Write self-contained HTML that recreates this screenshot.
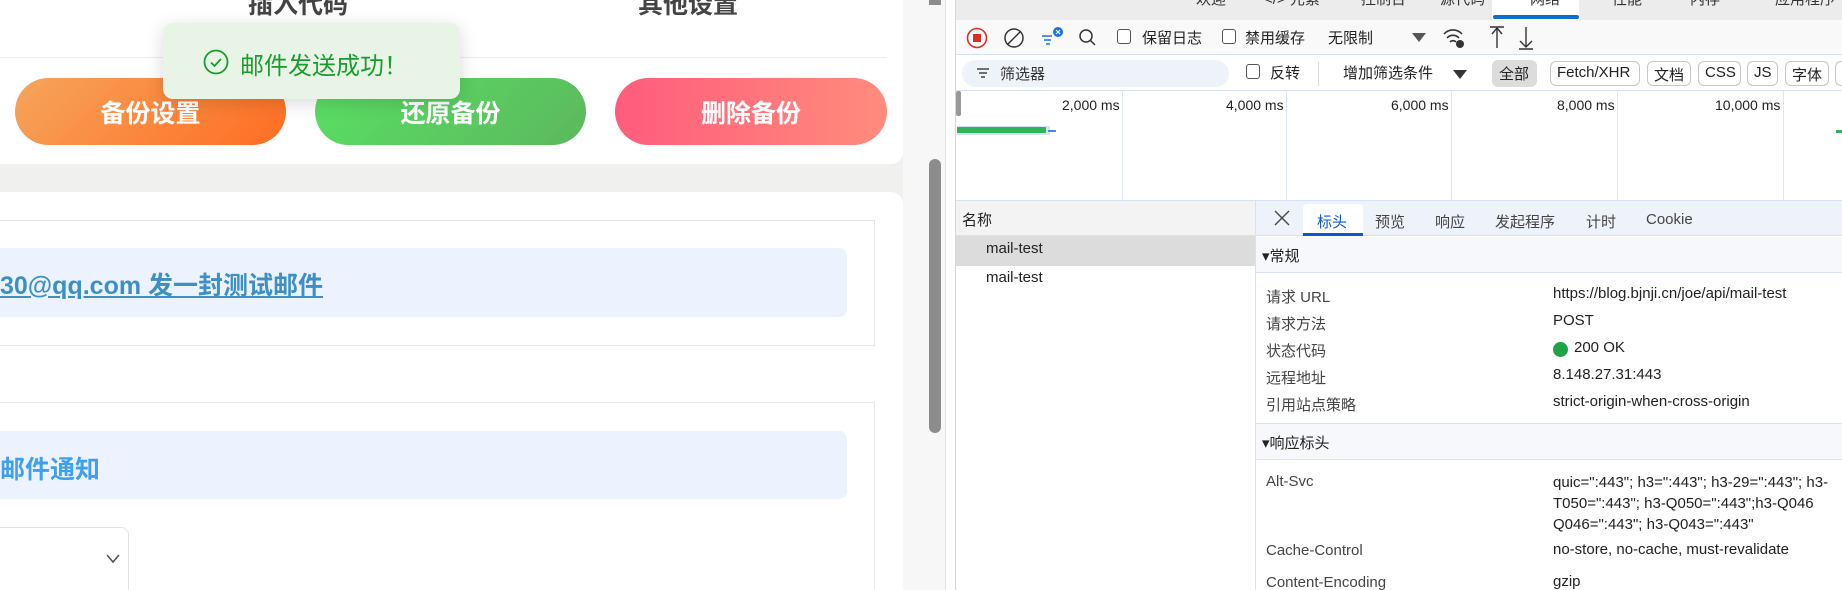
<!DOCTYPE html>
<html style="overflow:hidden"><head><meta charset="utf-8"><style>
*{margin:0;padding:0;box-sizing:border-box}
html,body{overflow:hidden}
body{width:1842px;height:590px;overflow:hidden;background:#f0f0ee;font-family:"Liberation Sans","Noto Sans CJK SC",sans-serif;position:relative}
.a{position:absolute;white-space:nowrap}
.btn{position:absolute;top:78px;height:67px;border-radius:34px;color:#fff;font-weight:bold;font-size:25px;display:flex;align-items:center;justify-content:center}
.dt{font-size:15px;color:#222}
.lab{color:#444;font-size:15px}
.vline{position:absolute;top:91px;height:109px;width:1px;background:#dde6f4}
.cb{position:absolute;width:14px;height:15px;border:1.5px solid #555;border-radius:3px;background:#fff}
.chip{position:absolute;top:61px;height:25px;border:1px solid #c8c8c8;border-radius:6px;font-size:15px;padding:2px 6px;color:#222}
</style></head><body>
<div class="a" style="left:0;top:0;width:903px;height:164px;background:#fff;border-radius:0 0 12px 0"></div>
<div class="a" style="left:248px;top:-15px;font-size:25px;font-weight:bold;color:#444">插入代码</div>
<div class="a" style="left:638px;top:-15px;font-size:25px;font-weight:bold;color:#444">其他设置</div>
<div class="a" style="left:0;top:57px;width:887px;height:1px;background:#ececf2"></div>
<div class="btn" style="left:15px;width:271px;background:linear-gradient(135deg,#f6a55c,#ff6d22)">备份设置</div>
<div class="btn" style="left:315px;width:271px;background:linear-gradient(135deg,#59e065,#5cb85c)">还原备份</div>
<div class="btn" style="left:615px;width:272px;background:linear-gradient(90deg,#ff5c7c,#ff8c7c)">删除备份</div>
<div class="a" style="left:0;top:192px;width:903px;height:400px;background:#fff;border-radius:0 12px 0 0"></div>
<div class="a" style="left:-2px;top:220px;width:877px;height:126px;border:1px solid #e6e6e6"></div>
<div class="a" style="left:0;top:248px;width:847px;height:69px;background:#ecf3fe;border-radius:0 8px 8px 0"></div>
<div class="a" style="left:0;top:266px;font-size:25px;font-weight:bold;color:#3d8fc6;text-decoration:underline">30@qq.com 发一封测试邮件</div>
<div class="a" style="left:-2px;top:402px;width:877px;height:200px;border:1px solid #e6e6e6"></div>
<div class="a" style="left:0;top:431px;width:847px;height:68px;background:#ecf3fe;border-radius:0 8px 8px 0"></div>
<div class="a" style="left:0;top:450px;font-size:25px;font-weight:bold;color:#3fa0f0">邮件通知</div>
<div class="a" style="left:-10px;top:527px;width:139px;height:80px;border:1px solid #e2e2e2;border-radius:8px;background:#fff"></div>
<svg class="a" style="left:106px;top:554px" width="14" height="10"><path d="M1 1L7 8L13 1" fill="none" stroke="#555" stroke-width="1.6"/></svg>
<div class="a" style="left:163px;top:23px;width:297px;height:76px;background:#e8f5e6;border-radius:10px;box-shadow:0 4px 18px rgba(0,0,0,.15)"></div>
<svg class="a" style="left:203px;top:49px" width="26" height="26"><circle cx="13" cy="13" r="11.5" fill="none" stroke="#1a9c2f" stroke-width="1.8"/><path d="M8 13.5l3.5 3.5 6.5-7" fill="none" stroke="#1a9c2f" stroke-width="1.8"/></svg>
<div class="a" style="left:240px;top:46px;font-size:24px;color:#1a9c2f">邮件发送成功！</div>
<div class="a" style="left:903px;top:0;width:52px;height:590px;background:#f7f7f7"></div>
<div class="a" style="left:945px;top:0;width:10px;height:590px;background:#fff;border-left:1px solid #e6e6e6"></div>
<div class="a" style="left:929px;top:159px;width:12px;height:274px;background:#8c8c8c;border-radius:6px"></div>
<div class="a" style="left:929px;top:0;width:12px;height:5px;background:#8c8c8c"></div>
<div class="a" style="left:955px;top:0;width:887px;height:590px;background:#fff;border-left:1px solid #cfd8e6"></div>
<div class="a" style="left:956px;top:0;width:886px;height:20px;background:#ececec"></div>
<div class="a" style="left:1492px;top:0;width:87px;height:20px;background:#fff"></div>
<div class="a" style="left:1493px;top:15px;width:86px;height:4px;background:#0b6fd0;border-radius:2px"></div>
<div class="a dt" style="left:1196px;top:-12px;color:#333">欢迎</div>
<div class="a dt" style="left:1264px;top:-12px;color:#333">&lt;/&gt; 元素</div>
<div class="a dt" style="left:1361px;top:-12px;color:#333">控制台</div>
<div class="a dt" style="left:1440px;top:-12px;color:#333">源代码</div>
<div class="a dt" style="left:1530px;top:-12px;color:#333">网络</div>
<div class="a dt" style="left:1612px;top:-12px;color:#333">性能</div>
<div class="a dt" style="left:1690px;top:-12px;color:#333">内存</div>
<div class="a dt" style="left:1775px;top:-12px;color:#333">应用程序</div>
<div class="a" style="left:956px;top:20px;width:886px;height:35px;background:#f9f9f9;border-bottom:1px solid #d6e2f4"></div>
<svg class="a" style="left:966px;top:27px" width="150" height="22">
<circle cx="11" cy="11" r="9.5" fill="none" stroke="#d93025" stroke-width="1.6"/><rect x="7" y="7" width="8" height="8" fill="#d93025"/>
<circle cx="48" cy="11" r="9" fill="none" stroke="#333" stroke-width="1.5"/><path d="M42 17L54 5" stroke="#333" stroke-width="1.5"/>
<path d="M76 9h10M78 13h7M80 17h4" stroke="#1a73e8" stroke-width="1.6"/><circle cx="92" cy="5" r="5" fill="#1a73e8"/><path d="M90 3l4 4M94 3l-4 4" stroke="#fff" stroke-width="1.2"/>
<circle cx="120" cy="9" r="6" fill="none" stroke="#333" stroke-width="1.5"/><path d="M124 13l5 5" stroke="#333" stroke-width="1.5"/>
</svg>
<div class="cb" style="left:1117px;top:29px"></div><div class="a dt" style="left:1142px;top:27px">保留日志</div>
<div class="cb" style="left:1222px;top:29px"></div><div class="a dt" style="left:1245px;top:27px">禁用缓存</div>
<div class="a dt" style="left:1328px;top:27px">无限制</div>
<div class="a" style="left:1412px;top:33px;border:7px solid transparent;border-top:9px solid #555"></div>
<svg class="a" style="left:1442px;top:25px" width="110" height="26"><path d="M2 9a12 12 0 0 1 18 0M5 13a8 8 0 0 1 12 0M8 17a4 4 0 0 1 6 0" fill="none" stroke="#333" stroke-width="1.6"/><circle cx="18" cy="19" r="4" fill="#333"/><path d="M48 2h14M55 3v20" stroke="#333" stroke-width="1.4"/><path d="M50 9l5-6 5 6" fill="none" stroke="#333" stroke-width="1.4"/><path d="M84 2v20M78 16l6 6 6-6M77 24h14" fill="none" stroke="#333" stroke-width="1.4"/></svg>
<div class="a" style="left:956px;top:55px;width:886px;height:36px;background:#fff;border-bottom:1px solid #d6e2f4"></div>
<div class="a" style="left:962px;top:60px;width:267px;height:27px;background:#eef2f9;border-radius:14px"></div>
<svg class="a" style="left:976px;top:67px" width="14" height="12"><path d="M1 2h12M3 6h8M5 10h4" stroke="#444" stroke-width="1.5"/></svg>
<div class="a dt" style="left:1000px;top:63px;color:#333">筛选器</div>
<div class="cb" style="left:1246px;top:64px"></div><div class="a dt" style="left:1270px;top:62px">反转</div>
<div class="a" style="left:1318px;top:62px;width:1px;height:24px;background:#ddd"></div>
<div class="a dt" style="left:1343px;top:62px">增加筛选条件</div>
<div class="a" style="left:1453px;top:70px;border:7px solid transparent;border-top:9px solid #333"></div>
<div class="a" style="left:1492px;top:60px;width:45px;height:27px;background:#dcdcdc;border-radius:6px"></div>
<div class="a dt" style="left:1499px;top:63px">全部</div>
<div class="chip" style="left:1550px;width:90px">Fetch/XHR</div>
<div class="chip" style="left:1647px;width:44px">文档</div>
<div class="chip" style="left:1698px;width:43px">CSS</div>
<div class="chip" style="left:1747px;width:31px">JS</div>
<div class="chip" style="left:1785px;width:44px">字体</div>
<div class="chip" style="left:1835px;width:7px;border-right:none;border-radius:6px 0 0 6px"></div>
<div class="vline" style="left:1122px"></div><div class="vline" style="left:1286px"></div><div class="vline" style="left:1451px"></div><div class="vline" style="left:1617px"></div><div class="vline" style="left:1783px"></div>
<div class="a" style="left:956px;top:91px;width:5px;height:25px;background:#999;border-radius:2px"></div>
<div class="a dt" style="left:1062px;top:97px;font-size:14px">2,000 ms</div>
<div class="a dt" style="left:1226px;top:97px;font-size:14px">4,000 ms</div>
<div class="a dt" style="left:1391px;top:97px;font-size:14px">6,000 ms</div>
<div class="a dt" style="left:1557px;top:97px;font-size:14px">8,000 ms</div>
<div class="a dt" style="left:1715px;top:97px;font-size:14px">10,000 ms</div>
<div class="a" style="left:957px;top:126px;width:93px;height:9px;background:#d6e4fa"></div>
<div class="a" style="left:957px;top:127px;width:89px;height:6px;background:#2fb457"></div>
<div class="a" style="left:1048px;top:130px;width:8px;height:2px;background:#4a8af0"></div>
<div class="a" style="left:1836px;top:130px;width:6px;height:3px;background:#2fb457"></div>
<div class="a" style="left:956px;top:200px;width:886px;height:1px;background:#d6e2f4"></div>
<div class="a" style="left:956px;top:201px;width:300px;height:35px;background:#f3f3f3;border-bottom:1px solid #d6e2f4"></div>
<div class="a dt" style="left:962px;top:209px">名称</div>
<div class="a" style="left:956px;top:236px;width:300px;height:30px;background:#dcdcdc"></div>
<div class="a dt" style="left:986px;top:240px">mail-test</div>
<div class="a dt" style="left:986px;top:269px">mail-test</div>
<div class="a" style="left:1255px;top:200px;width:1px;height:390px;background:#d6e2f4"></div>
<div class="a" style="left:1256px;top:201px;width:586px;height:35px;background:#eef2fa;border-bottom:1px solid #d6e2f4"></div>
<svg class="a" style="left:1274px;top:210px" width="16" height="16"><path d="M1 1L15 15M15 1L1 15" stroke="#444" stroke-width="1.4"/></svg>
<div class="a" style="left:1303px;top:204px;width:60px;height:32px;background:#fff;border-radius:4px 4px 0 0;border-bottom:3px solid #0b57d0"></div>
<div class="a dt" style="left:1317px;top:211px;color:#0b57d0">标头</div>
<div class="a dt" style="left:1375px;top:211px;color:#444">预览</div>
<div class="a dt" style="left:1435px;top:211px;color:#444">响应</div>
<div class="a dt" style="left:1495px;top:211px;color:#444">发起程序</div>
<div class="a dt" style="left:1586px;top:211px;color:#444">计时</div>
<div class="a dt" style="left:1646px;top:211px;color:#444">Cookie</div>
<div class="a" style="left:1256px;top:237px;width:586px;height:36px;background:#f6f8fc;border-bottom:1px solid #d6e2f4"></div>
<div class="a dt" style="left:1262px;top:245px">▾常规</div>
<div class="a lab" style="left:1266px;top:286px">请求 URL</div><div class="a dt" style="left:1553px;top:285px">https://blog.bjnji.cn/joe/api/mail-test</div>
<div class="a lab" style="left:1266px;top:313px">请求方法</div><div class="a dt" style="left:1553px;top:312px">POST</div>
<div class="a lab" style="left:1266px;top:340px">状态代码</div><div class="a" style="left:1553px;top:342px;width:15px;height:15px;border-radius:50%;background:#1ea446"></div><div class="a dt" style="left:1574px;top:339px">200 OK</div>
<div class="a lab" style="left:1266px;top:367px">远程地址</div><div class="a dt" style="left:1553px;top:366px">8.148.27.31:443</div>
<div class="a lab" style="left:1266px;top:394px">引用站点策略</div><div class="a dt" style="left:1553px;top:393px">strict-origin-when-cross-origin</div>
<div class="a" style="left:1256px;top:423px;width:586px;height:37px;background:#f6f8fc;border-top:1px solid #d6e2f4;border-bottom:1px solid #d6e2f4"></div>
<div class="a dt" style="left:1262px;top:432px">▾响应标头</div>
<div class="a lab" style="left:1266px;top:473px">Alt-Svc</div>
<div class="a dt" style="left:1553px;top:472px;line-height:21px">quic=":443"; h3=":443"; h3-29=":443"; h3-<br>T050=":443"; h3-Q050=":443";h3-Q046<br>Q046=":443"; h3-Q043=":443"</div>
<div class="a lab" style="left:1266px;top:542px">Cache-Control</div><div class="a dt" style="left:1553px;top:541px">no-store, no-cache, must-revalidate</div>
<div class="a lab" style="left:1266px;top:574px">Content-Encoding</div><div class="a dt" style="left:1553px;top:573px">gzip</div>
</body></html>
